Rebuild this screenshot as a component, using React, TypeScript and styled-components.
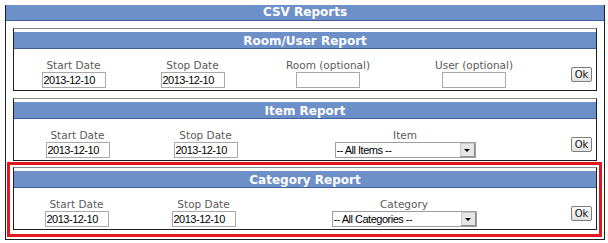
import React from 'react';
import styled, { createGlobalStyle } from 'styled-components';

const GlobalStyle = createGlobalStyle`
  html, body { margin: 0; padding: 0; background: #ffffff; }
  body { font-family: "DejaVu Sans", Verdana, sans-serif; }
  * { box-sizing: border-box; }
`;

const Frame = styled.div`
  margin: 5px 0 0 5px;
  width: 600px;
  border: 1px solid #1e1e1e;
  border-top: none;
`;

const MainTitle = styled.div`
  height: 16px;
  line-height: 15px;
  background: #6d90c9;
  border-bottom: 1px solid #3f5f9c;
  color: #ffffff;
  font-weight: bold;
  font-size: 12px;
  text-align: center;
`;

const Body = styled.div`
  padding: 7px 7px 1px;
`;

const Panel = styled.section<{ $gap?: number }>`
  margin-top: ${(p) => p.$gap ?? 0}px;
  border: 1px solid #1e1e1e;
  border-top-color: #8a8a8a;
  padding-top: 3px;
  background: #ffffff;
`;

const Highlight = styled.div`
  margin: 1px -5px 1px -6px;
  border: 3px solid #e3171f;
  padding: 2px 2px 4px 3px;
`;

const PanelTitle = styled.div`
  height: 17px;
  line-height: 18px;
  background: #6d90c9;
  border-bottom: 1px solid #3f5f9c;
  color: #ffffff;
  font-weight: bold;
  font-size: 12px;
  text-align: center;
`;

const Fields = styled.div<{ $cols: string }>`
  display: grid;
  grid-template-columns: ${(p) => p.$cols};
  align-items: center;
  padding: 10px 0 2px;
`;

const Field = styled.div`
  display: flex;
  flex-direction: column;
  align-items: center;
`;

const Label = styled.label`
  font-size: 10.5px;
  line-height: 13px;
  color: #5a5a5a;
  white-space: nowrap;
`;

const TextInput = styled.input`
  width: 64px;
  height: 16px;
  margin: 0;
  border: 1px solid #a9a9ac;
  padding: 0 1px;
  font-family: "Liberation Sans", Arial, sans-serif;
  font-size: 11px;
  letter-spacing: -0.5px;
  color: #000000;
  background: #ffffff;
  outline: none;
`;

const SelectWrap = styled.div<{ $width: number }>`
  position: relative;
  width: ${(p) => p.$width}px;
  height: 16px;
`;

const NativeSelect = styled.select`
  appearance: none;
  -webkit-appearance: none;
  display: block;
  width: 100%;
  height: 16px;
  margin: 0;
  border: 1px solid #9d9d9d;
  border-radius: 0;
  padding: 0 16px 0 1px;
  font-family: "Liberation Sans", Arial, sans-serif;
  font-size: 11px;
  letter-spacing: -0.5px;
  line-height: 14px;
  color: #000000;
  background: #ffffff;
  outline: none;
`;

const ArrowBox = styled.span`
  position: absolute;
  top: 1px;
  right: 1px;
  bottom: 1px;
  width: 15px;
  display: flex;
  align-items: center;
  justify-content: center;
  background: #e6e6e6;
  border: 1px solid #8e8e8e;
  border-top-color: #c8c8c8;
  border-left-color: #c8c8c8;
  pointer-events: none;
`;

const Triangle = styled.span`
  width: 0;
  height: 0;
  border-left: 3px solid transparent;
  border-right: 3px solid transparent;
  border-top: 3px solid #000000;
  margin-top: 1px;
`;

const OkButton = styled.button`
  justify-self: end;
  margin-right: 4px;
  margin-top: 1px;
  width: 21px;
  height: 15px;
  padding: 0;
  border: 1px solid #7d7d7d;
  border-radius: 2px;
  background: linear-gradient(#fcfcfc, #e2e2e2);
  font-family: "DejaVu Sans", Verdana, sans-serif;
  font-size: 10px;
  line-height: 13px;
  color: #111111;
`;

type Column =
  | { kind: 'text'; label: string; value?: string }
  | { kind: 'select'; label: string; option: string; width: number };

type Report = { title: string; cols: string; fields: Column[] };

const reports: Report[] = [
  {
    title: 'Room/User Report',
    cols: '119px 119px 152px 140px 1fr',
    fields: [
      { kind: 'text', label: 'Start Date', value: '2013-12-10' },
      { kind: 'text', label: 'Stop Date', value: '2013-12-10' },
      { kind: 'text', label: 'Room (optional)' },
      { kind: 'text', label: 'User (optional)' },
    ],
  },
  {
    title: 'Item Report',
    cols: '127px 129px 270px 1fr',
    fields: [
      { kind: 'text', label: 'Start Date', value: '2013-12-10' },
      { kind: 'text', label: 'Stop Date', value: '2013-12-10' },
      { kind: 'select', label: 'Item', option: '-- All Items --', width: 141 },
    ],
  },
  {
    title: 'Category Report',
    cols: '125px 129px 272px 1fr',
    fields: [
      { kind: 'text', label: 'Start Date', value: '2013-12-10' },
      { kind: 'text', label: 'Stop Date', value: '2013-12-10' },
      { kind: 'select', label: 'Category', option: '-- All Categories --', width: 145 },
    ],
  },
];

function ReportPanel({ report, gap }: { report: Report; gap?: number }) {
  return (
    <Panel $gap={gap}>
      <PanelTitle>{report.title}</PanelTitle>
      <Fields $cols={report.cols}>
        {report.fields.map((f) => (
          <Field key={f.label}>
            <Label>{f.label}</Label>
            {f.kind === 'text' ? (
              <TextInput type="text" defaultValue={f.value ?? ''} />
            ) : (
              <SelectWrap $width={f.width}>
                <NativeSelect defaultValue="all">
                  <option value="all">{f.option}</option>
                </NativeSelect>
                <ArrowBox>
                  <Triangle />
                </ArrowBox>
              </SelectWrap>
            )}
          </Field>
        ))}
        <OkButton type="button">Ok</OkButton>
      </Fields>
    </Panel>
  );
}

export default function App() {
  return (
    <>
      <GlobalStyle />
      <Frame>
        <MainTitle>CSV Reports</MainTitle>
        <Body>
          <ReportPanel report={reports[0]} />
          <ReportPanel report={reports[1]} gap={7} />
          <Highlight>
            <ReportPanel report={reports[2]} />
          </Highlight>
        </Body>
      </Frame>
    </>
  );
}
